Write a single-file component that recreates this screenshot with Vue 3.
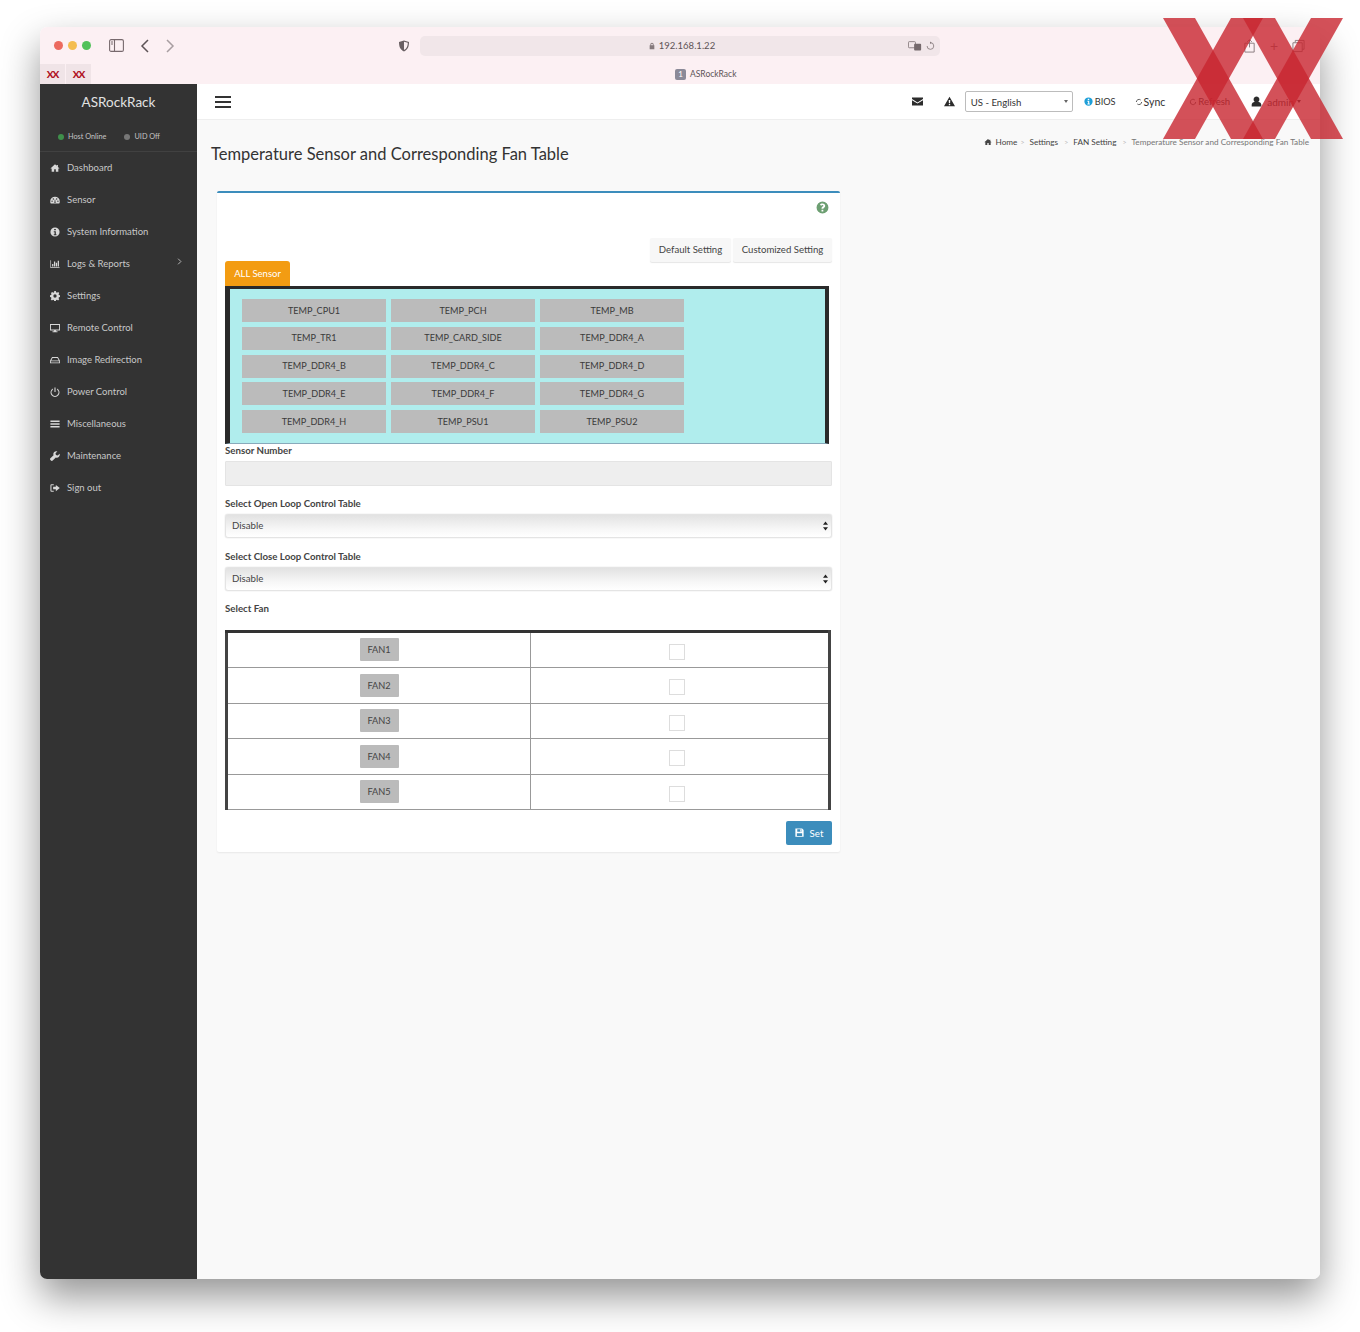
<script setup>
const icons = {
  home: 'M12 3 1 13h3v8h6v-6h4v6h6v-8h3l-4-3.6V5h-3v1.7z',
  gauge: 'M12 4A11.5 11.5 0 0 0 .5 15.5c0 2 .5 3.6 1.4 5h20.2c.9-1.400 1.400-3 1.400-5A11.500 11.500 0 0 0 12 4zM5 13a1.700 1.700 0 1 1 0 3.400A1.700 1.700 0 0 1 5 13zm3-5a1.700 1.700 0 1 1 0 3.400A1.700 1.700 0 0 1 8 8zm8 0a1.700 1.700 0 1 1 0 3.400A1.700 1.700 0 0 1 16 8zm3 5a1.700 1.700 0 1 1 0 3.400 1.700 1.700 0 0 1 0-3.400zM10.500 19l1-8.500h1l1 8.500z',
  info: 'M12 1a11 11 0 1 0 0 22 11 11 0 0 0 0-22zm-2 3.500h4v3.500h-4zm-1 5.500h5v7.500h1.500V20h-6.500v-2.500H11v-5H9z',
  chart: 'M1 3h1.500v16.500H23V21.500H1zM5 12h3v6H5zM9.500 6h3v12h-3zM14 9h3v9h-3zM18.500 4h3v14h-3z',
  cog: 'M10 0h4l.6 3 2.200.9 2.600-1.700 2.800 2.800-1.700 2.600.9 2.200 3 .6v4l-3 .6-.9 2.200 1.700 2.600-2.800 2.800-2.600-1.700-2.200.9-.6 3h-4l-.6-3-2.200-.9-2.600 1.700-2.800-2.800 1.700-2.600-.9-2.200-3-.6v-4l3-.6.9-2.200L2.400 5l2.800-2.800 2.600 1.700L10 3zM12 8a4 4 0 1 0 0 8 4 4 0 0 0 0-8z',
  desktop: 'M0 2.500h24V18H14.500v2H18v2H6v-2h3.500v-2H0zm2.200 2.200V15.500h19.600V4.700z',
  hdd: 'M5 5h14l5 9v6H0v-6zm1.200 2L3 13h18l-3.200-6zM2 15v3h20v-3z',
  power: 'M10.700 1h2.600v11h-2.600zM7 3.700v3a8 8 0 1 0 10 0v-3a10.700 10.700 0 1 1-10 0z',
  bars: 'M1 3.500h22v3.500H1zM1 10.300h22v3.500H1zM1 17h22v3.500H1z',
  wrench: 'M23 6.500l-4.500 4.300-4.300-1-1-4.300L17.700 1a7 7 0 0 0-9.200 9L1 17.500a3 3 0 0 0 0 4.200l1.300 1.300a3 3 0 0 0 4.200 0L14 15.500a7 7 0 0 0 9-9z',
  signout: 'M9 3H3.500A2.500 2.500 0 0 0 1 5.500v13A2.500 2.500 0 0 0 3.500 21H9v-2.500H3.500v-13H9zM14 4.500l9.500 7.500-9.500 7.500V15H7.500V9H14z',
  envelope: 'M0 3.500h24v3L12 14 0 6.500zM0 9l12 7.500L24 9v11.500H0z',
  warning: 'M12 1.500 24 22.500H0zM10.300 8.500l.4 7.500h2.600l.4-7.500zm.2 9v2.500h3v-2.500z',
  user: 'M12 1a6.500 6.500 0 0 1 4 11.600c3.500 1 6.500 3.400 6.500 6.400v4H1.500v-4c0-3 3-5.400 6.500-6.400A6.500 6.500 0 0 1 12 1z',
  save: 'M1 1h18l4 4v18H1zM6 3v7h11V3zm8 1h2v5h-2zM5 14v7h14v-7z',
  question: 'M12 1a11 11 0 1 0 0 22 11 11 0 0 0 0-22zM12 4.500c3 0 5 1.800 5 4.300 0 2-1 3-2.500 3.900-.8.5-1 .9-1 1.800h-3.300v-1c0-1.500.6-2.400 1.900-3.200 1-.6 1.500-1 1.500-1.700 0-.8-.7-1.300-1.600-1.300-1 0-1.700.5-2.300 1.500L7.300 7C8.300 5.400 9.800 4.500 12 4.500zM10.200 16h3.300v3.300h-3.300z',
  lock: 'M7 10V7.500a5 5 0 0 1 10 0V10h2v12H5V10zm2.500 0h5V7.500a2.500 2.500 0 0 0-5 0z',
  shield: 'M12 1 22 4c0 9-2 15-10 19C4 19 2 13 2 4zm0 2.500V20.200c5.800-3.300 7.500-8 7.600-14.500z'
}

const menu = [
  { icon: 'home', label: 'Dashboard' },
  { icon: 'gauge', label: 'Sensor' },
  { icon: 'info', label: 'System Information' },
  { icon: 'chart', label: 'Logs & Reports', more: true },
  { icon: 'cog', label: 'Settings' },
  { icon: 'desktop', label: 'Remote Control' },
  { icon: 'hdd', label: 'Image Redirection' },
  { icon: 'power', label: 'Power Control' },
  { icon: 'bars', label: 'Miscellaneous' },
  { icon: 'wrench', label: 'Maintenance' },
  { icon: 'signout', label: 'Sign out' }
]

const sensors = [
  'TEMP_CPU1', 'TEMP_PCH', 'TEMP_MB',
  'TEMP_TR1', 'TEMP_CARD_SIDE', 'TEMP_DDR4_A',
  'TEMP_DDR4_B', 'TEMP_DDR4_C', 'TEMP_DDR4_D',
  'TEMP_DDR4_E', 'TEMP_DDR4_F', 'TEMP_DDR4_G',
  'TEMP_DDR4_H', 'TEMP_PSU1', 'TEMP_PSU2'
]

const fans = ['FAN1', 'FAN2', 'FAN3', 'FAN4', 'FAN5']
const crumbs = ['Settings', 'FAN Setting']
const loops = ['Select Open Loop Control Table', 'Select Close Loop Control Table']
const xMarks = [0, 80]
</script>

<template>
  <div class="window">
    <header class="chrome">
      <div class="chrome-top">
        <div class="lights">
          <span class="dot red"></span><span class="dot yellow"></span><span class="dot green"></span>
        </div>
        <svg class="chrome-ico side-ico" viewBox="0 0 15 13"><rect x=".6" y=".6" width="13.800" height="11.800" rx="1.500" fill="none" stroke="#77696d" stroke-width="1.100"/><path d="M5.500 .6v11.800" stroke="#77696d" stroke-width="1.100"/><path d="M2 3h2M2 5h2" stroke="#77696d"/></svg>
        <svg class="chrome-ico back" viewBox="0 0 10 14"><path d="M8 1 2 7l6 6" fill="none" stroke="#5d5356" stroke-width="1.500"/></svg>
        <svg class="chrome-ico fwd" viewBox="0 0 10 14"><path d="m2 1 6 6-6 6" fill="none" stroke="#a89ea1" stroke-width="1.500"/></svg>
        <svg class="chrome-ico shield" viewBox="0 0 24 24"><path :d="icons.shield" fill="#6a6063" fill-rule="evenodd"/></svg>
        <div class="address">
          <span class="address-text"><svg class="lock" viewBox="0 0 24 24"><path :d="icons.lock" fill="#85797c" fill-rule="evenodd"/></svg>192.168.1.22</span>
          <span class="address-tools">
            <svg class="translate" viewBox="0 0 16 11"><rect x=".5" y=".5" width="8" height="7" rx="1" fill="none" stroke="#85797c"/><rect x="7" y="3" width="8" height="7.500" rx="1" fill="#75696c"/></svg>
            <svg class="reload" viewBox="0 0 12 12"><path d="M6.500 2a4 4 0 1 1-4 4" fill="none" stroke="#85797c"/><path d="M6 .5v3L8 2z" fill="#85797c"/></svg>
          </span>
        </div>
        <div class="chrome-right">
          <svg class="chrome-ico" viewBox="0 0 12 15"><path d="M1 4.500h10V14H1zM6 9V1M3.500 3 6 .8 8.500 3" fill="none" stroke="#85797c"/></svg>
          <span class="plus">+</span>
          <svg class="chrome-ico" viewBox="0 0 14 14"><path d="M1 3.500h10V13H1zM3.500 3V1H13v9.500h-2" fill="none" stroke="#85797c"/></svg>
        </div>
      </div>
      <div class="chrome-tabs">
        <div class="pins">
          <span class="pin">XX</span>
          <span class="pin">XX</span>
        </div>
        <div class="tab-title"><span class="tab-badge">1</span>ASRockRack</div>
      </div>
    </header>

    <div class="app">
      <aside class="sidebar">
        <div class="brand">ASRockRack</div>
        <div class="status">
          <span class="stat"><i class="led on"></i>Host Online</span>
          <span class="stat"><i class="led"></i>UID Off</span>
        </div>
        <nav class="menu">
          <a v-for="m in menu" :key="m.label" class="menu-item">
            <svg class="menu-ico" viewBox="0 0 24 24"><path :d="icons[m.icon]" fill-rule="evenodd"/></svg>
            <span>{{ m.label }}</span>
            <svg v-if="m.more" class="menu-more" viewBox="0 0 6 10"><path d="m1 1 4 4-4 4" fill="none" stroke="#ccc" stroke-width="1.200"/></svg>
          </a>
        </nav>
      </aside>

      <main class="main">
        <div class="topbar">
          <div class="burger"><i></i><i></i><i></i></div>
          <div class="top-right">
            <svg class="top-ico env" viewBox="0 0 24 24"><path :d="icons.envelope"/></svg>
            <svg class="top-ico warn" viewBox="0 0 24 24"><path :d="icons.warning" fill-rule="evenodd"/></svg>
            <div class="lang">US - English<i class="caret"></i></div>
            <a class="top-link bios"><svg class="top-ico mini" viewBox="0 0 24 24"><path :d="icons.info" fill="#1e9fd8" fill-rule="evenodd"/></svg>BIOS</a>
            <a class="top-link sync"><svg class="spin" viewBox="0 0 12 12"><path d="M2 6a4 4 0 0 1 6.500-3M10 6a4 4 0 0 1-6.500 3" fill="none" stroke="#444" stroke-width="1.300"/></svg>Sync</a>
            <a class="top-link refresh"><svg class="spin" viewBox="0 0 12 12"><path d="M10 6a4 4 0 1 1-1.300-3" fill="none" stroke="#444" stroke-width="1.300"/></svg>Refresh</a>
            <a class="top-link admin"><svg class="top-ico user" viewBox="0 0 24 24"><path :d="icons.user"/></svg>admin<i class="caret dark"></i></a>
          </div>
        </div>

        <div class="heading">
          <h1>Temperature Sensor and Corresponding Fan Table</h1>
          <ol class="crumbs">
            <li><svg class="crumb-ico" viewBox="0 0 24 24"><path :d="icons.home"/></svg>Home</li>
            <li v-for="c in crumbs" :key="c"><span class="sep">&gt;</span>{{ c }}</li>
            <li class="current"><span class="sep">&gt;</span>Temperature Sensor and Corresponding Fan Table</li>
          </ol>
        </div>

        <section class="card">
          <div class="help"><svg viewBox="0 0 24 24"><path :d="icons.question" fill="#6d9f72" fill-rule="evenodd"/></svg></div>
          <div class="presets">
            <button class="preset">Default Setting</button>
            <button class="preset">Customized Setting</button>
          </div>
          <button class="all-tab">ALL Sensor</button>
          <div class="sensor-panel">
            <div class="sensor-grid">
              <button v-for="s in sensors" :key="s" class="sensor">{{ s }}</button>
            </div>
          </div>

          <label class="lbl first">Sensor Number</label>
          <input class="field" disabled />

          <template v-for="t in loops" :key="t">
            <label class="lbl">{{ t }}</label>
            <div class="select-wrap">
              <select class="field sel"><option>Disable</option></select>
              <svg class="updown" viewBox="0 0 6 11"><path d="M3 0 6 4H0zM3 11 0 7h6z" fill="#222"/></svg>
            </div>
          </template>

          <label class="lbl fan-lbl">Select Fan</label>
          <table class="fans">
            <tbody>
              <tr v-for="f in fans" :key="f">
                <td class="fan-name"><span class="fan-btn">{{ f }}</span></td>
                <td class="fan-check"><input type="checkbox" class="check" /></td>
              </tr>
            </tbody>
          </table>

          <div class="actions">
            <button class="set"><svg viewBox="0 0 24 24"><path :d="icons.save" fill="#fff" fill-rule="evenodd"/></svg>Set</button>
          </div>
        </section>
      </main>
    </div>
  </div>

  <svg class="stamp" viewBox="0 0 180 121" aria-hidden="true">
    <g v-for="x in xMarks" :key="x" :transform="`translate(${x} 0)`">
      <polygon points="0,0 32,0 100,121 68,121" />
      <polygon points="100,0 68,0 0,121 32,121" />
    </g>
  </svg>
</template>

<style>
html, body { margin: 0; background: #fff; }
</style>

<style scoped>
.window {
  width: 1280px;
  height: 1252px;
  margin: 27px 40px 53px;
  border-radius: 7px;
  overflow: hidden;
  display: flex;
  flex-direction: column;
  box-shadow: 0 18px 38px rgba(0, 0, 0, .42);
  font-family: "Lato", "Noto Sans", sans-serif;
  color: #333;
}
.chrome { height: 57px; flex: none; background: #fcf0f3; display: flex; flex-direction: column; }
.chrome-top { height: 37px; display: flex; align-items: center; padding-left: 14px; }
.lights { display: flex; gap: 5px; }
.dot { width: 9px; height: 9px; border-radius: 50%; }
.red { background: #ec6a5f; }
.yellow { background: #f4bd4f; }
.green { background: #52c15a; }
.chrome-ico { flex: none; }
.side-ico { width: 15px; height: 13px; margin-left: 18px; }
.back { width: 10px; height: 14px; margin-left: 16px; }
.fwd { width: 10px; height: 14px; margin-left: 15px; }
.shield { width: 12px; height: 12px; margin-left: 223px; }
.address { width: 520px; height: 20px; margin-left: 10px; border-radius: 5px; background: #f1e6e9; position: relative; display: flex; align-items: center; justify-content: center; font-size: 9.5px; color: #5d5356; }
.address-text { display: flex; align-items: center; margin-left: 3px; }
.lock { width: 8px; height: 8px; margin-right: 3px; }
.address-tools { position: absolute; right: 5px; top: 4px; display: flex; align-items: center; gap: 3px; height: 12px; }
.translate { width: 14px; height: 10px; }
.reload { width: 10px; height: 10px; }
.chrome-right { margin-left: 303px; display: flex; align-items: center; gap: 14px; }
.chrome-right .chrome-ico { width: 13px; height: 14px; }
.plus { color: #85797c; font-size: 14px; line-height: 14px; }
.chrome-tabs { flex: 1; display: flex; position: relative; align-items: stretch; }
.pins { display: flex; }
.pin { width: 25px; margin-right: 1px; background: #f0e4e7; color: #b1121f; font-size: 10px; font-weight: 900; letter-spacing: -1px; display: flex; align-items: center; justify-content: center; }
.tab-title { margin-left: 583px; display: flex; align-items: center; font-size: 8.5px; color: #5d5356; }
.tab-badge { width: 11px; height: 11px; border-radius: 2px; background: #8b8a98; color: #fff; font-size: 8px; display: inline-flex; align-items: center; justify-content: center; margin-right: 4px; }

.app { flex: 1; display: flex; min-height: 0; }
.sidebar { width: 157px; flex: none; background: #333; color: #c8c8c8; }
.brand { height: 36px; line-height: 36px; text-align: center; font-size: 13.5px; color: #e2e2e2; }
.status { height: 32px; box-sizing: border-box; padding: 2px 0 0 18px; border-bottom: 1px solid #414141; display: flex; align-items: center; gap: 18px; font-size: 7.3px; color: #c4c4c4; }
.stat { display: flex; align-items: center; }
.led { width: 6px; height: 6px; border-radius: 50%; background: #777; margin-right: 4px; }
.led.on { background: #3f8f4b; }
.menu { display: flex; flex-direction: column; }
.menu-item { height: 32px; display: flex; align-items: center; padding-left: 10px; padding-bottom: 1px; box-sizing: border-box; font-size: 9.5px; position: relative; }
.menu-ico { width: 10px; height: 10px; margin-right: 7px; fill: #d8d8d8; flex: none; }
.menu-more { width: 5px; height: 7px; position: absolute; left: 137px; top: 10px; }

.main { flex: 1; background: #f9f9f9; min-width: 0; }
.topbar { height: 35px; background: #fff; border-bottom: 1px solid #eee; display: flex; align-items: center; justify-content: space-between; padding: 0 19px 0 18px; }
.burger { display: flex; flex-direction: column; gap: 3px; }
.burger i { display: block; width: 16px; height: 2px; background: #333; }
.top-right { display: flex; align-items: center; font-size: 9.6px; color: #333; }
.top-ico { width: 11px; height: 11px; fill: #2c2c2c; flex: none; }
.warn { margin-left: 21px; }
.lang { width: 101px; height: 18px; margin-left: 10px; padding: 1px 0 0 5px; border: 1px solid #bcbcbc; border-radius: 2px; display: flex; align-items: center; position: relative; }
.caret { width: 0; height: 0; border-left: 2.500px solid transparent; border-right: 2.500px solid transparent; border-top: 3.500px solid #666; }
.lang .caret { position: absolute; right: 4px; top: 8px; }
.top-link { display: flex; align-items: center; }
.mini { width: 9px; height: 9px; margin-right: 2px; }
.spin { width: 8px; height: 8px; margin-right: 1px; flex: none; }
.bios { margin-left: 11px; font-size: 9.2px; }
.sync { margin-left: 19px; font-size: 10.5px; }
.refresh { margin-left: 24px; }
.admin { margin-left: 21px; font-size: 10px; }
.user { margin-right: 5px; }
.caret.dark { margin-left: 3px; border-top-color: #333; }

.heading { position: relative; height: 71px; padding-left: 14px; }
.heading h1 { margin: 0; padding-top: 22px; font-size: 16.5px; line-height: 24px; font-weight: 400; color: #333; }
.crumbs { position: absolute; right: 11px; top: 16.5px; margin: 0; padding: 0; list-style: none; display: flex; font-size: 8.2px; color: #444; }
.crumbs li { display: flex; align-items: center; white-space: nowrap; }
.crumbs li:nth-child(2) .sep { margin-left: 3px; }
.crumb-ico { width: 8px; height: 8px; margin-right: 4px; fill: #444; }
.sep { color: #bbb; margin: 0 5px 0 6px; font-size: 7px; }
.current { color: #777; }

.card { width: 623px; height: 661px; margin-left: 20px; padding: 0 8px; box-sizing: border-box; background: #fff; border-top: 2px solid #3c8dbc; border-radius: 2px; box-shadow: 0 1px 2px rgba(0, 0, 0, .07); }
.help { display: flex; justify-content: flex-end; padding-top: 8px; height: 45px; box-sizing: border-box; }
.help svg { width: 13px; height: 13px; margin-right: 3px; }
.presets { display: flex; justify-content: flex-end; gap: 2px; height: 24px; }
.preset { height: 24px; padding: 0 0 2px; border: 0; border-radius: 2px; background: #f7f7f7; box-shadow: 0 1px 1px rgba(0, 0, 0, .1); font: 9.6px "Lato", "Noto Sans", sans-serif; color: #444; white-space: nowrap; }
.preset:first-child { width: 81px; }
.preset:last-child { width: 99px; }
.all-tab { display: block; width: 65px; height: 25px; margin-top: -1px; padding: 0 0 1px; border: 0; border-radius: 3px 3px 0 0; background: #f39c12; color: #fff; font: 9.5px "Lato", "Noto Sans", sans-serif; }
.sensor-panel { height: 158px; margin-right: 3px; background: #b0eded; border-top: 3px solid #2a2a2a; border-left: 5px solid #2a2a2a; border-right: 4px solid #2a2a2a; border-bottom: 1px solid #8ab; box-sizing: border-box; padding: 10px 0 0 12px; }
.sensor-grid { display: grid; grid-template-columns: repeat(3, 144px); column-gap: 5px; row-gap: 4.75px; }
.sensor { height: 23px; padding: 0 0 1px; border: 0; background: #bbb; font: 9.1px "Lato", "Noto Sans", sans-serif; color: #3a3a3a; }
.lbl { display: block; height: 14px; line-height: 14px; font-size: 9.7px; font-weight: 700; color: #444; margin-top: 9.5px; margin-bottom: 4.5px; }
.select-wrap + .lbl { margin-top: 10.5px; }
.lbl.first { margin-top: -1px; margin-bottom: 4px; }
.field { display: block; width: 100%; height: 25px; box-sizing: border-box; padding: 0 6px; border: 1px solid #e4e4e4; background: #eee; border-radius: 1px; font: 9.7px "Lato", "Noto Sans", sans-serif; color: #444; }
.select-wrap { position: relative; }
.sel { appearance: none; height: 24px; border-radius: 3px; padding-bottom: 2px; background: linear-gradient(#e2e2e2, #f7f7f7 65%, #fff); box-shadow: 0 0 1px rgba(0, 0, 0, .3); }
.updown { position: absolute; right: 4px; top: 7px; width: 5px; height: 10px; }
.select-wrap + .fan-lbl { margin-top: 9.5px; margin-bottom: 15px; }
.fans { width: 606px; height: 179px; border-collapse: collapse; border-top: 3px solid #333; border-left: 3px solid #444; border-right: 3px solid #444; table-layout: fixed; }
.fans td { border-bottom: 1px solid #999; text-align: center; padding: 0; height: 34.5px; }
.fan-name { width: 302px; border-right: 1px solid #999; }
.fan-btn { display: inline-block; width: 39px; height: 23px; line-height: 23px; border-radius: 1px; background: #bbb; font-size: 9.2px; color: #444; vertical-align: middle; }
.fan-check { padding-right: 6px !important; }
.check { appearance: none; width: 16px; height: 16px; margin: 0; border: 1px solid #ddd; background: #fff; vertical-align: middle; }
.actions { display: flex; justify-content: flex-end; margin-top: 10.5px; }
.set { width: 46px; height: 24px; padding: 0; border: 0; border-radius: 2px; background: #3c8dbc; color: #fff; font: 9.7px "Lato", "Noto Sans", sans-serif; display: flex; align-items: center; justify-content: center; }
.set svg { width: 9px; height: 9px; margin-right: 6px; }

.stamp { position: absolute; left: 1163px; top: 18px; width: 180px; height: 121px; pointer-events: none; }
.stamp polygon { fill: rgba(200, 38, 48, .8); }
</style>
